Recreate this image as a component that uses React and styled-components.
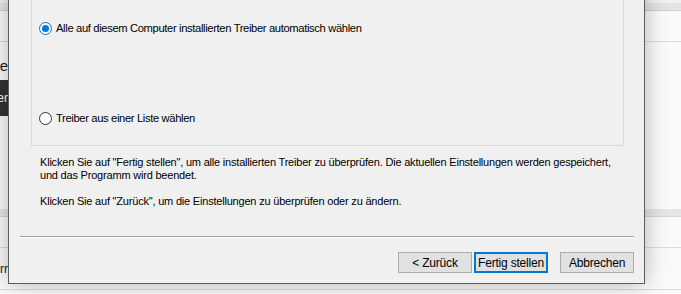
import React from "react";
import styled, { createGlobalStyle } from "styled-components";

const GlobalStyle = createGlobalStyle`
  html, body {
    margin: 0;
    padding: 0;
    background: #fafafa;
  }
  body {
    font-family: "Liberation Sans", Arial, sans-serif;
  }
`;

const Desktop = styled.div`
  position: relative;
  width: 681px;
  height: 294px;
  overflow: hidden;
  background: #fafafa;
`;

// the window behind the dialog
const BackWindow = styled.div`
  display: flex;
  flex-direction: column;
  width: 100%;
  height: 100%;
`;

const Strip = styled.div`
  height: ${(p) => p.h}px;
  box-sizing: border-box;
  flex-shrink: 0;
  padding-top: ${(p) => p.pt || 0}px;
  background: ${(p) => p.bg || "transparent"};
  border-bottom: ${(p) => (p.line ? `1px solid ${p.line}` : "none")};
  display: flex;
  align-items: center;
`;

const Cut = styled.div`
  width: 8px;
  display: flex;
  justify-content: flex-end;
  overflow: hidden;
  white-space: nowrap;
  font-size: ${(p) => p.size || 12}px;
  color: ${(p) => p.color || "#1a1a1a"};
`;

const DarkItem = styled.div`
  width: 220px;
  height: 100%;
  background: #333333;
  display: flex;
  align-items: center;
`;

const Dialog = styled.div`
  position: absolute;
  left: 8px;
  top: -56px;
  width: 637px;
  height: 340px;
  box-sizing: border-box;
  background: #f0f0f0;
  border: 1px solid #5c5c5c;
  box-shadow: 0 0 22px rgba(0, 0, 0, 0.28);
  display: flex;
  flex-direction: column;
  padding: 5px 0 10px 0;
`;

const GroupBox = styled.div`
  margin-left: 22px;
  width: 593px;
  height: 196px;
  box-sizing: border-box;
  border: 1px solid #dadada;
  padding: 69px 0 0 7px;
  display: flex;
  flex-direction: column;
  gap: 74px;
`;

const RadioRow = styled.label`
  display: flex;
  align-items: center;
  height: 16px;
  gap: 4px;
  font-size: 11.2px;
  color: #000;
  letter-spacing: -0.35px;
`;

const RadioCircle = styled.span`
  width: 13px;
  height: 13px;
  box-sizing: border-box;
  border-radius: 50%;
  background: #fff;
  border: 1px solid ${(p) => (p.checked ? "#0078d7" : "#333")};
  display: flex;
  align-items: center;
  justify-content: center;
  &::after {
    content: "";
    width: 7px;
    height: 7px;
    border-radius: 50%;
    background: ${(p) => (p.checked ? "#0078d7" : "transparent")};
  }
`;

const Note = styled.p`
  margin: ${(p) => (p.first ? "10px" : "13px")} 0 0 31px;
  font-size: 11px;
  line-height: 13px;
  color: #000;
  white-space: nowrap;
  letter-spacing: -0.2px;
`;

const Separator = styled.div`
  margin: auto 0 14px 11px;
  width: 614px;
  height: 1px;
  background: #a0a0a0;
  border-bottom: 1px solid #fff;
`;

const ButtonBar = styled.div`
  display: flex;
  justify-content: flex-end;
  padding-right: 10px;
  gap: 2px;
`;

const Button = styled.button`
  width: 74px;
  height: 21px;
  box-sizing: border-box;
  margin: 0;
  margin-left: ${(p) => (p.spaced ? "10px" : "0")};
  padding: 0;
  background: #e1e1e1;
  border: ${(p) => (p.primary ? "2px solid #0078d7" : "1px solid #adadad")};
  font-family: "Liberation Sans", Arial, sans-serif;
  font-size: 12px;
  color: #000;
  letter-spacing: -0.2px;
`;

export default function App() {
  return (
    <Desktop>
      <GlobalStyle />
      <BackWindow>
        <Strip h={3} bg="#f2f2f2" />
        <Strip h={8} bg="#e4e4e4" line="#d0d0d0" />
        <Strip h={31} line="#dcdcdc" />
        <Strip h={38} pt={8}>
          <Cut size={15}>Gerätetreibe</Cut>
        </Strip>
        <Strip h={36}>
          <DarkItem>
            <Cut color="#ffffff">Treiber</Cut>
          </DarkItem>
        </Strip>
        <Strip h={93} />
        <Strip h={8} bg="#e6e6e6" line="#d6d6d6" />
        <Strip h={31} line="#dcdcdc" />
        <Strip h={42} line="#dcdcdc">
          <Cut>Fehlerr</Cut>
        </Strip>
      </BackWindow>

      <Dialog>
        <GroupBox>
          <RadioRow>
            <RadioCircle checked />
            Alle auf diesem Computer installierten Treiber automatisch wählen
          </RadioRow>
          <RadioRow>
            <RadioCircle />
            Treiber aus einer Liste wählen
          </RadioRow>
        </GroupBox>
        <Note first>
          Klicken Sie auf "Fertig stellen", um alle installierten Treiber zu
          überprüfen. Die aktuellen Einstellungen werden gespeichert,
          <br />
          und das Programm wird beendet.
        </Note>
        <Note>
          Klicken Sie auf "Zurück", um die Einstellungen zu überprüfen oder zu
          ändern.
        </Note>
        <Separator />
        <ButtonBar>
          <Button>&lt; Zurück</Button>
          <Button primary>Fertig stellen</Button>
          <Button spaced>Abbrechen</Button>
        </ButtonBar>
      </Dialog>
    </Desktop>
  );
}
